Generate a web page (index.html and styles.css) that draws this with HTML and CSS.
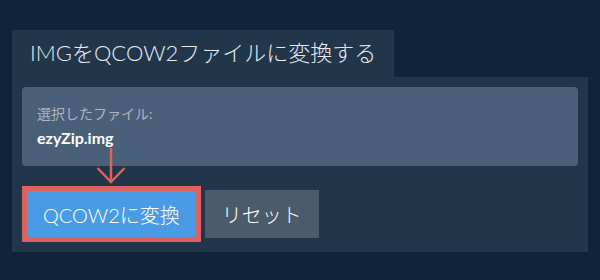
FILE: index.html
```html
<!DOCTYPE html>
<html>
	<head>
		<meta charset="utf-8">
		<title>IMGをQCOW2ファイルに変換する</title>
		<link rel="stylesheet" href="styles.css">
	</head>
	<body>
		<div class="wrap">
			<div class="tab">IMGをQCOW2ファイルに変換する</div>
			<div class="panel">
				<div class="file">
					<div class="label">選択したファイル:</div>
					<div class="name">ezyZip.img</div>
				</div>
				<div class="actions">
					<button class="convert">QCOW2に変換</button>
					<button class="reset">リセット</button>
				</div>
				<!-- 矢印 -->
				<svg class="arrow" width="30" height="36" viewBox="0 0 30 36">
					<path d="M15 0 L15 34 M1.5 20 L15 34 L28.5 20" fill="none" stroke="#dc625d" stroke-width="2.5"/>
				</svg>
			</div>
		</div>
	</body>
</html>
```

FILE: styles.css
```css
body{
	margin: 0;
	background: #11233a;
	font-family: Lato, "Noto Sans CJK JP", sans-serif;
}
.wrap{
	width: 576px;
	padding: 30px 0 0 12px;
}
.tab{
	display: inline-block;
	height: 47px;
	line-height: 46px;
	padding: 0 18px;
	background: #22364b;
	color: #e6e9ee;
	font-size: 22px;
	font-weight: 300;
}
.panel{
	position: relative;
	background: #22364b;
	padding: 10px;
}
.file{
	background: #4a6079;
	border-radius: 4px;
	padding: 17px 15px;
}
.label{
	font-size: 14px;
	line-height: 20px;
	color: #aab5c3;
	margin-bottom: 3px;
}
.name{
	font-size: 16px;
	line-height: 22px;
	font-weight: bold;
	color: #ffffff;
}
.actions{
	display: flex;
	align-items: center;
	gap: 4px;
	margin-top: 20px;
}
button{
	font-family: Lato, "Noto Sans CJK JP", sans-serif;
	font-size: 20px;
	font-weight: 300;
	color: #ffffff;
	border: none;
	margin: 0;
	cursor: pointer;
}
.convert{
	height: 56px;
	padding: 0 16px;
	background: #4a9be6;
	border: 5px solid #dc625d;
}
.reset{
	height: 48px;
	padding: 0 17px;
	background: #4b5b6c;
}
.arrow{
	position: absolute;
	left: 84px;
	top: 71px;
}
```
